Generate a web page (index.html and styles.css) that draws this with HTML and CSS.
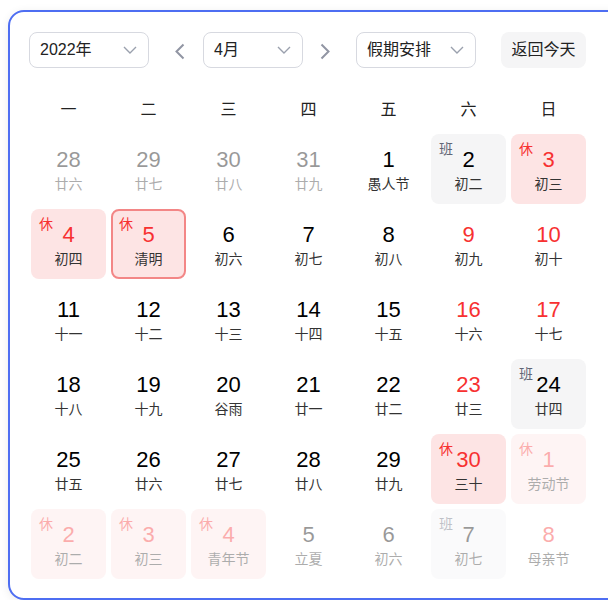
FILE: index.html
```html
<!DOCTYPE html>
<html lang="zh-CN">
<head>
<meta charset="utf-8">
<title>万年历</title>
<link rel="stylesheet" href="styles.css">
</head>
<body>
<div class="card">
  <div class="toolbar">
    <div class="select sel-year"><span>2022年</span><svg class="chev" viewBox="0 0 14 8"><path d="M1 1l6 6 6-6"/></svg></div>
    <svg class="arrow arrow-prev" viewBox="0 0 11 17"><path d="M9.5 1.5L2.5 8.5l7 7"/></svg>
    <div class="select sel-month"><span>4月</span><svg class="chev" viewBox="0 0 14 8"><path d="M1 1l6 6 6-6"/></svg></div>
    <svg class="arrow arrow-next" viewBox="0 0 11 17"><path d="M1.5 1.5l7 7-7 7"/></svg>
    <div class="select sel-holiday"><span>假期安排</span><svg class="chev" viewBox="0 0 14 8"><path d="M1 1l6 6 6-6"/></svg></div>
    <div class="btn-today">返回今天</div>
  </div>
  <div class="weekdays">
    <div>一</div><div>二</div><div>三</div><div>四</div><div>五</div><div>六</div><div>日</div>
  </div>
  <div class="days">
    <div class="day other"><div class="num">28</div><div class="lunar">廿六</div></div>
    <div class="day other"><div class="num">29</div><div class="lunar">廿七</div></div>
    <div class="day other"><div class="num">30</div><div class="lunar">廿八</div></div>
    <div class="day other"><div class="num">31</div><div class="lunar">廿九</div></div>
    <div class="day"><div class="num">1</div><div class="lunar">愚人节</div></div>
    <div class="day work"><span class="tag">班</span><div class="num">2</div><div class="lunar">初二</div></div>
    <div class="day rest"><span class="tag">休</span><div class="num">3</div><div class="lunar">初三</div></div>

    <div class="day rest"><span class="tag">休</span><div class="num">4</div><div class="lunar">初四</div></div>
    <div class="day rest today"><span class="tag">休</span><div class="num">5</div><div class="lunar">清明</div></div>
    <div class="day"><div class="num">6</div><div class="lunar">初六</div></div>
    <div class="day"><div class="num">7</div><div class="lunar">初七</div></div>
    <div class="day"><div class="num">8</div><div class="lunar">初八</div></div>
    <div class="day weekend"><div class="num">9</div><div class="lunar">初九</div></div>
    <div class="day weekend"><div class="num">10</div><div class="lunar">初十</div></div>

    <div class="day"><div class="num">11</div><div class="lunar">十一</div></div>
    <div class="day"><div class="num">12</div><div class="lunar">十二</div></div>
    <div class="day"><div class="num">13</div><div class="lunar">十三</div></div>
    <div class="day"><div class="num">14</div><div class="lunar">十四</div></div>
    <div class="day"><div class="num">15</div><div class="lunar">十五</div></div>
    <div class="day weekend"><div class="num">16</div><div class="lunar">十六</div></div>
    <div class="day weekend"><div class="num">17</div><div class="lunar">十七</div></div>

    <div class="day"><div class="num">18</div><div class="lunar">十八</div></div>
    <div class="day"><div class="num">19</div><div class="lunar">十九</div></div>
    <div class="day"><div class="num">20</div><div class="lunar">谷雨</div></div>
    <div class="day"><div class="num">21</div><div class="lunar">廿一</div></div>
    <div class="day"><div class="num">22</div><div class="lunar">廿二</div></div>
    <div class="day weekend"><div class="num">23</div><div class="lunar">廿三</div></div>
    <div class="day work"><span class="tag">班</span><div class="num">24</div><div class="lunar">廿四</div></div>

    <div class="day"><div class="num">25</div><div class="lunar">廿五</div></div>
    <div class="day"><div class="num">26</div><div class="lunar">廿六</div></div>
    <div class="day"><div class="num">27</div><div class="lunar">廿七</div></div>
    <div class="day"><div class="num">28</div><div class="lunar">廿八</div></div>
    <div class="day"><div class="num">29</div><div class="lunar">廿九</div></div>
    <div class="day rest"><span class="tag">休</span><div class="num">30</div><div class="lunar">三十</div></div>
    <div class="day rest other"><span class="tag">休</span><div class="num">1</div><div class="lunar">劳动节</div></div>

    <div class="day rest other"><span class="tag">休</span><div class="num">2</div><div class="lunar">初二</div></div>
    <div class="day rest other"><span class="tag">休</span><div class="num">3</div><div class="lunar">初三</div></div>
    <div class="day rest other"><span class="tag">休</span><div class="num">4</div><div class="lunar">青年节</div></div>
    <div class="day other"><div class="num">5</div><div class="lunar">立夏</div></div>
    <div class="day other"><div class="num">6</div><div class="lunar">初六</div></div>
    <div class="day work other"><span class="tag">班</span><div class="num">7</div><div class="lunar">初七</div></div>
    <div class="day weekend other"><div class="num">8</div><div class="lunar">母亲节</div></div>
  </div>
</div>
</body>
</html>
```
FILE: styles.css
```css
* { box-sizing: border-box; }
html, body { margin: 0; padding: 0; background: #fff; }
body {
  font-family: "Liberation Sans", "Noto Sans CJK SC", sans-serif;
  color: #222;
  overflow: hidden;
}
.card {
  margin: 10px 0 0 8px;
  width: 640px;
  border: 2px solid #4e6ef2;
  border-radius: 16px;
  background: #fff;
  padding: 20px 0 19px 19px;
  box-shadow: 0 2px 10px rgba(0, 0, 0, 0.08);
}
.toolbar {
  display: flex;
  align-items: center;
  height: 36px;
}
.select {
  height: 36px;
  border: 1px solid #d7d9e0;
  border-radius: 8px;
  display: flex;
  align-items: center;
  justify-content: space-between;
  padding: 0 11px 0 10px;
  font-size: 16px;
  line-height: 20px;
  color: #222;
}
.sel-year { width: 120px; }
.sel-month { width: 100px; margin-left: 18px; }
.sel-holiday { width: 120px; margin-left: 25px; }
.chev {
  width: 14px;
  height: 8px;
  fill: none;
  stroke: #9aa0ad;
  stroke-width: 1.4;
}
.arrow {
  width: 11px;
  height: 17px;
  fill: none;
  stroke: #9195a3;
  stroke-width: 2;
  margin-top: 2px;
}
.arrow-prev { margin-left: 25px; }
.arrow-next { margin-left: 17px; }
.btn-today {
  margin-left: 25px;
  height: 36px;
  width: 85px;
  border-radius: 8px;
  background: #f5f5f6;
  font-size: 16px;
  line-height: 36px;
  text-align: center;
  color: #222;
}
.weekdays {
  display: grid;
  grid-template-columns: repeat(7, 75px);
  column-gap: 5px;
  margin: 22px 0 0 2px;
  height: 40px;
  line-height: 40px;
  font-size: 16px;
  text-align: center;
  color: #222;
}
.days {
  display: grid;
  grid-template-columns: repeat(7, 75px);
  grid-auto-rows: 70px;
  gap: 5px;
  margin: 4px 0 0 2px;
}
.day {
  position: relative;
  border-radius: 8px;
  display: flex;
  flex-direction: column;
  align-items: center;
  padding-top: 14px;
}
.num {
  font-size: 22px;
  line-height: 24px;
  color: #000;
}
.lunar {
  margin-top: 2px;
  font-size: 14px;
  line-height: 20px;
  color: #333;
}
.tag {
  position: absolute;
  top: 8px;
  left: 8px;
  font-size: 14px;
  line-height: 15px;
}
.rest { background: #fde4e4; }
.rest .num, .rest .tag, .weekend .num { color: #f73131; }
.work { background: #f5f5f6; }
.work .tag { color: #626675; }
.today { border: 2px solid #f38686; padding-top: 12px; }
.today .tag { top: 6px; left: 6px; }
.other { opacity: 0.4; }
```
